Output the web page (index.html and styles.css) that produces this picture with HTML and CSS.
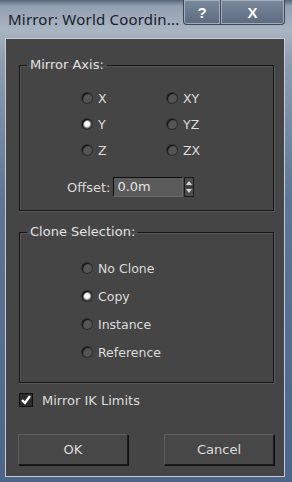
FILE: index.html
```html
<!DOCTYPE html>
<html lang="en">
<head>
    <meta charset="UTF-8">
    <title>Mirror: World Coordinates</title>
    <link rel="stylesheet" href="styles.css">
</head>
<body>
    <div class="window">
        <div class="titlebar">
            <span class="title">Mirror: World Coordin...</span>
            <div class="caption-buttons">
                <span class="cap-btn help">?</span>
                <span class="cap-btn close">X</span>
            </div>
        </div>

        <div class="client">
            <fieldset class="group axis">
                <legend>Mirror Axis:</legend>
                <div class="radio-grid">
                    <label class="radio-item"><span class="radio"></span>X</label>
                    <label class="radio-item"><span class="radio"></span>XY</label>
                    <label class="radio-item"><span class="radio checked"></span>Y</label>
                    <label class="radio-item"><span class="radio"></span>YZ</label>
                    <label class="radio-item"><span class="radio"></span>Z</label>
                    <label class="radio-item"><span class="radio"></span>ZX</label>
                </div>
                <div class="offset-row">
                    <span class="offset-label">Offset:</span>
                    <span class="spin-input">0.0m</span>
                    <span class="spinner">
                        <svg width="8" height="18" viewBox="0 0 8 18">
                            <polygon points="4,3 7,7 1,7" fill="#d6d6d6"/>
                            <line x1="0" y1="9" x2="8" y2="9" stroke="#2a2a2a"/>
                            <polygon points="1,11 7,11 4,15" fill="#d6d6d6"/>
                        </svg>
                    </span>
                </div>
            </fieldset>

            <fieldset class="group clone">
                <legend>Clone Selection:</legend>
                <div class="radio-list">
                    <label class="radio-item"><span class="radio"></span>No Clone</label>
                    <label class="radio-item"><span class="radio checked"></span>Copy</label>
                    <label class="radio-item"><span class="radio"></span>Instance</label>
                    <label class="radio-item"><span class="radio"></span>Reference</label>
                </div>
            </fieldset>

            <label class="check-row">
                <span class="checkbox">
                    <svg width="12" height="12" viewBox="0 0 12 12">
                        <polyline points="2,6 5,9 10,2" fill="none" stroke="#ffffff" stroke-width="2.4"/>
                    </svg>
                </span>
                Mirror IK Limits
            </label>

            <div class="buttons">
                <button class="btn">OK</button>
                <button class="btn">Cancel</button>
            </div>
        </div>
    </div>
</body>
</html>
```

FILE: styles.css
```css
body {
    margin: 0;
    padding: 0;
    background-color: #4a6284;
}
.window {
    width: 292px;
    height: 482px;
    box-sizing: border-box;
    background: linear-gradient(180deg, #56657a 0px, #93a0b1 6px, #aab5c3 30px, #8f9db0 60px, #5e7595 200px, #4d6588 482px);
    display: flex;
    flex-direction: column;
    font-family: "DejaVu Sans", sans-serif;
}
.titlebar {
    height: 38px;
    display: flex;
    justify-content: space-between;
    align-items: flex-start;
    padding: 0 7px 0 8px;
    flex-shrink: 0;
}
.title {
    font-family: "Noto Sans", sans-serif;
    font-size: 15px;
    color: #18202b;
    margin-top: 9px;
    letter-spacing: 0.2px;
}
.caption-buttons {
    display: flex;
}
.cap-btn {
    height: 25px;
    box-sizing: border-box;
    display: flex;
    justify-content: center;
    align-items: center;
    color: #ffffff;
    font-family: "Liberation Sans", sans-serif;
    font-weight: bold;
    font-size: 15px;
    background: linear-gradient(180deg, #7a889b, #5c6b80);
    border: 1px solid #3c4757;
    border-top: none;
    box-shadow: inset 0 0 0 1px #a3aebd;
}
.help {
    width: 38px;
    border-bottom-left-radius: 4px;
}
.close {
    width: 64px;
    border-left: none;
    border-bottom-right-radius: 4px;
}
.client {
    flex: 1;
    margin: 0 7px 5px 5px;
    background-color: #454545;
    border: 1px solid #c3ccd8;
    padding: 18px 10px 0 13px;
    color: #dcdcdc;
    font-size: 12.5px;
}
.group {
    margin: 0;
    border: 1px solid #161616;
    box-shadow: 1px 1px 0 #5a5a5a, inset 1px 1px 0 #565656;
    padding: 0;
}
.group legend {
    line-height: 16px;
    padding: 0 3px;
    margin-left: 7px;
    color: #e2e2e2;
    font-size: 13px;
}
.axis {
    padding: 12px 0 12px 0;
}
.clone {
    margin-top: 13px;
    padding: 14px 0 16px 0;
}
.radio-grid {
    display: grid;
    grid-template-columns: 85px 85px;
    grid-auto-rows: 26px;
    padding-left: 62px;
}
.radio-list {
    display: grid;
    grid-auto-rows: 28px;
    padding-left: 62px;
}
.radio-item {
    display: flex;
    align-items: center;
    gap: 6px;
}
.radio {
    width: 10px;
    height: 10px;
    border-radius: 50%;
    background-color: #555555;
    box-shadow: inset 1px 1px 1px #0c0c0c, 0 0 0 1px #2e2e2e;
}
.radio.checked {
    background: radial-gradient(circle, #ffffff 0, #f4f4f4 2.5px, #9a9a9a 3.5px, #2b2b2b 5px);
}
.offset-row {
    display: flex;
    align-items: center;
    height: 22px;
    margin-top: 13px;
    padding-left: 47px;
}
.offset-label {
    margin-right: 3px;
    font-size: 13px;
}
.spin-input {
    width: 70px;
    height: 20px;
    box-sizing: border-box;
    background-color: #5b5b5b;
    border: 1px solid #0e0e0e;
    border-right-color: #6a6a6a;
    border-bottom-color: #6a6a6a;
    padding: 1px 3px;
    line-height: 16px;
    color: #e4e4e4;
    font-size: 13px;
}
.spinner {
    width: 10px;
    height: 20px;
    box-sizing: border-box;
    margin-left: 1px;
    background-color: #4c4c4c;
    border: 1px solid #1a1a1a;
    display: flex;
    justify-content: center;
    align-items: center;
}
.check-row {
    display: flex;
    align-items: center;
    gap: 9px;
    height: 16px;
    margin-top: 9px;
    font-size: 13px;
}
.checkbox {
    width: 14px;
    height: 14px;
    box-sizing: border-box;
    background-color: #2c2c2c;
    border: 1px solid #101010;
    display: flex;
    justify-content: center;
    align-items: center;
}
.buttons {
    display: flex;
    justify-content: space-between;
    margin-top: 26px;
    margin-left: -1px;
}
.btn {
    width: 110px;
    height: 31px;
    background-color: #474747;
    color: #dedede;
    font-family: "DejaVu Sans", sans-serif;
    font-size: 13px;
    border: 1px solid #1c1c1c;
    border-top-color: #5e5e5e;
    border-left-color: #5e5e5e;
    box-shadow: 1px 1px 0 #111111;
    padding: 0;
}
```
